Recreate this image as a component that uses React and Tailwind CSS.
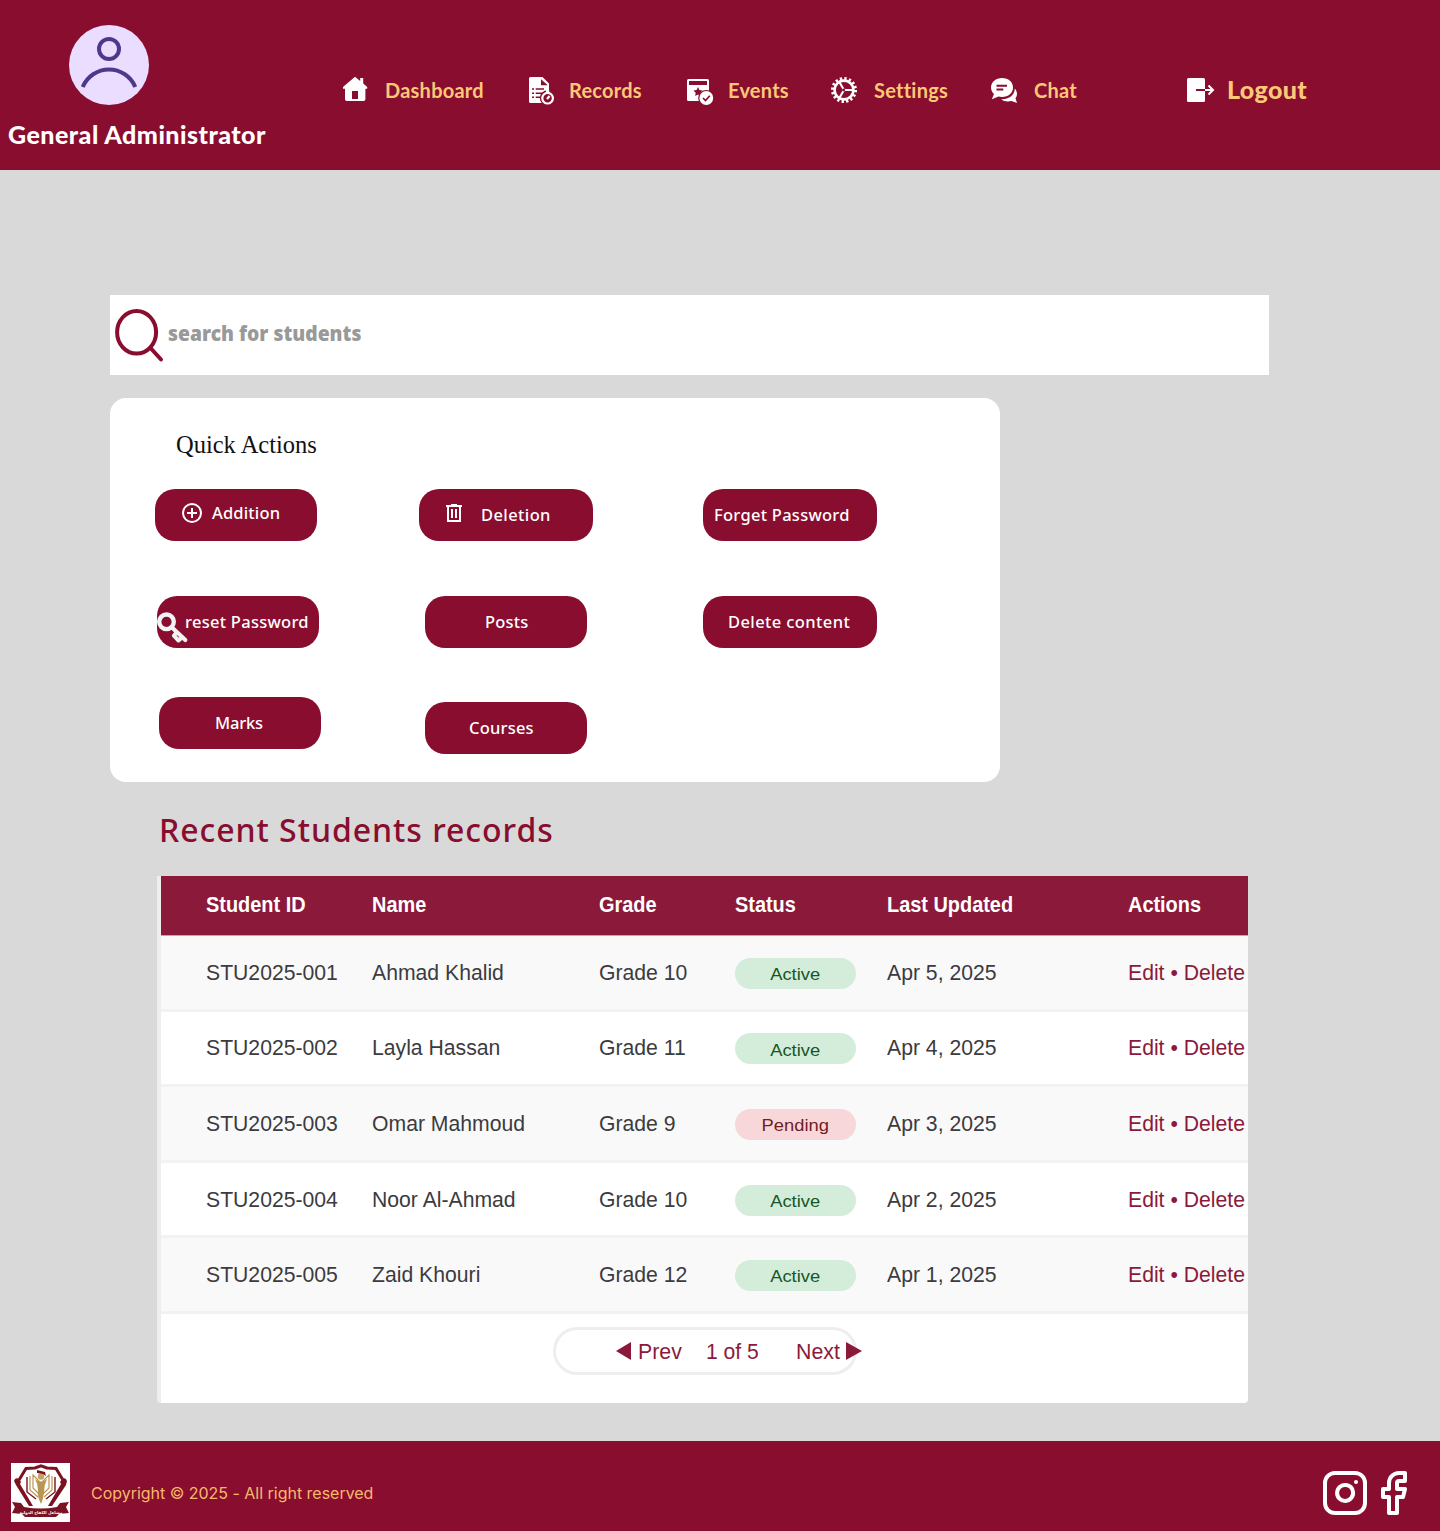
import React from "react";

const HomeIcon = () => (
  <svg width="30" height="30" viewBox="0 0 30 30" fill="white" className="shrink-0">
    <path fillRule="evenodd" d="M14 1.800 19.200 6V3h3v5.600l4 3.400v1.800h-1.800V24.300q0 1.700-1.700 1.700H5.700Q4 26 4 24.300V13.800H2V12zM11 16v8h6v-8z" />
  </svg>
);

const RecordsIcon = () => (
  <svg width="30" height="30" viewBox="0 0 30 30" className="shrink-0">
    <path d="M3.500 2H15.500L22 8.500V28H3.500Q2 28 2 26.500V3.500Q2 2 3.500 2Z" fill="white" />
    <path d="M14 4.300V10.300H20.800Z" fill="#890d2f" />
    <path d="M5 14h2M5 18.200h2M5 22.300h2M8.700 14H17M8.700 18.200H16M8.700 22.300H13" stroke="#890d2f" strokeWidth="1.500" />
    <circle cx="20.600" cy="23" r="7.800" fill="#890d2f" />
    <circle cx="20.600" cy="23.200" r="5.300" fill="none" stroke="white" strokeWidth="2.200" />
    <path d="M19 16h3.200M20 24l2.600-3" stroke="white" strokeWidth="2.200" />
  </svg>
);

const EventsIcon = () => (
  <svg width="30" height="30" viewBox="0 0 30 30" className="shrink-0">
    <rect x="1" y="4" width="22" height="22" rx="1.600" fill="white" />
    <rect x="3" y="6" width="18" height="4" fill="#890d2f" />
    <path d="m12 12 1.400 3 3.200.400-2.300 2.300.5 3.300-2.800-1.500-2.800 1.500.5-3.300L7.400 15.400l3.200-.4z" fill="#890d2f" />
    <circle cx="20.300" cy="23" r="8.100" fill="#890d2f" />
    <circle cx="20.300" cy="23" r="6.900" fill="white" />
    <path d="m17 23 2.500 2.500 4.300-4.800" fill="none" stroke="#890d2f" strokeWidth="1.700" />
  </svg>
);

const SettingsIcon = () => (
  <svg width="30" height="30" viewBox="0 0 30 30" fill="none" stroke="white" className="shrink-0">
    <circle cx="14" cy="15" r="11.500" strokeWidth="3" strokeDasharray="2.300 2.216" />
    <circle cx="14" cy="15" r="9.400" strokeWidth="2.600" />
    <path d="M15 15H23M14 15 9.500 7.200M14 15 9.500 22.800" strokeWidth="2.100" />
    <circle cx="13.600" cy="15" r="1.400" fill="#890d2f" stroke="none" />
  </svg>
);

const ChatIcon = () => (
  <svg width="30" height="30" viewBox="0 0 30 30" fill="white" className="shrink-0">
    <path d="M12 3C6 3 1 7 1 12.500c0 2.600 1.200 4.800 3 6.500L1.800 24.200 8.500 21.500c1 .3 2.300.5 3.500.5 6.500 0 11-4 11-9.500S18.500 3 12 3z" />
    <path d="M6.500 10.700H17M6.500 14.500H13.300" stroke="#890d2f" strokeWidth="1.900" />
    <path d="M24.800 13.500c3 3.500 2.600 7.300.7 9.700L27 28l-5.500-2c-4 1-8 .3-10.200-1.800C18.500 24.500 24.700 20.500 24.800 13.500z" />
  </svg>
);

const LogoutIcon = () => (
  <svg width="30" height="30" viewBox="0 0 30 30" fill="none" className="shrink-0">
    <rect x="1" y="3" width="18" height="24" rx="1.500" fill="white" />
    <path d="M10 15H19" stroke="#890d2f" strokeWidth="2" />
    <path d="M19 15H27M22.500 10.500 27 15 22.500 19.500" stroke="white" strokeWidth="2" />
  </svg>
);

const AddIcon = () => (
  <svg width="24" height="24" viewBox="0 0 24 24" fill="none" stroke="white" strokeWidth="2" className="shrink-0">
    <circle cx="12" cy="12" r="9" />
    <path d="M12 7v10M7 12h10" />
  </svg>
);

const TrashIcon = () => (
  <svg width="24" height="24" viewBox="0 0 24 24" fill="none" stroke="white" strokeWidth="2" className="shrink-0">
    <path d="M4 5h16M9 4h6M6 5v15h12V5M10 8v9M14 8v9" />
  </svg>
);

const KeyIcon = () => (
  <svg width="32" height="32" viewBox="0 0 32 32" fill="none" stroke="#f3f3f3" className="shrink-0">
    <circle cx="9.500" cy="9.800" r="7.300" strokeWidth="4.400" />
    <path d="M14.500 15 28.300 28" strokeWidth="4.200" strokeLinecap="round" />
    <path d="m19.500 20.500-2.600 3.200 4.600 4.800L25.500 25" strokeWidth="4" strokeLinejoin="round" />
  </svg>
);

const SchoolLogo = () => (
  <svg width="59" height="59" viewBox="0 0 59 59" className="shrink-0 bg-white">
    <path d="M8 17 15 5.500 24 5 30 2.800 36 5 45 5.500 52 17" fill="none" stroke="#7b1221" strokeWidth="3" />
    <path d="M3 18q1-4 5-2l2 3-1 2 13 22h-4L5 22zM56 18q-1-4-5-2l-2 3 1 2-13 22h4l14-21z" fill="#7b1221" />
    <path d="M16 14v15l9 7M44 14v15l-9 7" fill="none" stroke="#7b1221" strokeWidth="1.400" />
    <path d="M19 13v14l8 7M41 13v14l-8 7M22 12v13l6 6V18zM38 12v13l-6 6V18z" fill="none" stroke="#b99652" strokeWidth="1.200" />
    <path d="M24 16q6 5 12 0-3 6-3 13-1 8-3 12-4-8-3-14 0-6-3-11z" fill="#b99652" />
    <circle cx="30" cy="13.500" r="3.200" fill="#c3a262" />
    <path d="m26 7 8 2 1 4-3-2-6-1z" fill="#7b1221" />
    <path d="M1 39l9 1 3 4q17 3 33 0l3-4 9-1-3 5 3 6-10 1-3 3H14l-3-3-10-1 3-6z" fill="#7b1221" />
    <text x="30" y="51.300" textAnchor="middle" fill="white" fontSize="4" fontWeight="700" fontFamily="DejaVu Sans, sans-serif">مشاعل الكفاح الدولية</text>
  </svg>
);

const navText = "whitespace-nowrap font-['Lato'] text-[20px] font-bold tracking-[0.24px] text-[#fbc876]";

const navigation = [
  { label: "Dashboard", Icon: HomeIcon, box: "w-[186px] gap-[14px]" },
  { label: "Records", Icon: RecordsIcon, box: "w-[159px] gap-3" },
  { label: "Events", Icon: EventsIcon, box: "w-[144px] gap-3" },
  { label: "Settings", Icon: SettingsIcon, box: "w-[160px] gap-[14px]" },
  { label: "Chat", Icon: ChatIcon, box: "w-[196px] gap-[14px]" },
];

const Header = () => (
  <header className="flex h-[170px] bg-[#890d2f]">
    <div className="w-[341px] pt-[25px]">
      <svg width="80" height="80" viewBox="0 0 80 80" fill="none" stroke="#4f378a" strokeWidth="4" className="ml-[69px]">
        <circle cx="40" cy="40" r="40" fill="#eaddff" stroke="none" />
        <circle cx="40" cy="24" r="10" />
        <path d="M13.700 62A28.500 28.500 0 0 1 66.300 62" />
      </svg>
      <h1 className="mt-3 ml-2 whitespace-nowrap font-['Lato'] text-[25px] leading-[34px] font-black tracking-[0.48px] text-white">General Administrator</h1>
    </div>
    <nav className="mt-[75px] flex h-[30px]">
      {navigation.map(({ label, Icon, box }) => (
        <a key={label} className={`flex items-center ${box}`}>
          <Icon />
          <span className={navText}>{label}</span>
        </a>
      ))}
      <a className="flex items-center gap-[11px]">
        <LogoutIcon />
        <span className="font-['Lato'] text-[25px] font-black tracking-[0.35px] text-[#fbc876]">Logout</span>
      </a>
    </nav>
  </header>
);

const actionStyle = "flex h-[52px] items-center rounded-[20px] bg-[#890d2f] whitespace-nowrap font-['Noto_Sans'] text-[16.500px] font-medium text-white";

const QuickActions = () => (
  <section className="mt-[23px] ml-[110px] h-[384px] w-[890px] rounded-2xl bg-white pt-[31px]">
    <h2 className="ml-[66px] font-['Liberation_Serif'] text-[24.500px] leading-8 text-[#111]">Quick Actions</h2>
    <div className="mt-[28px] ml-[45px] flex gap-[102px]">
      <button className={`${actionStyle} w-[162px] gap-2 pb-1 pl-[25px] tracking-[0.15px]`}><AddIcon />Addition</button>
      <button className={`${actionStyle} w-[174px] pl-[23px] tracking-[0.4px]`}><span className="mr-[15px] mb-1"><TrashIcon /></span>Deletion</button>
      <button className={`${actionStyle} ml-2 w-[174px] pl-[11px] tracking-[0.27px]`}>Forget Password</button>
    </div>
    <div className="mt-[55px] ml-[47px] flex">
      <button className={`${actionStyle} w-[162px] tracking-[0.27px]`}><span className="mt-[11px] -mr-1"><KeyIcon /></span>reset Password</button>
      <button className={`${actionStyle} ml-[106px] w-[162px] pl-[60px] tracking-[0.2px]`}>Posts</button>
      <button className={`${actionStyle} ml-[116px] w-[174px] pl-[25px] tracking-[0.4px]`}>Delete content</button>
    </div>
    <div className="mt-[49px] ml-[49px] flex gap-[104px]">
      <button className={`${actionStyle} w-[162px] pl-14 tracking-[-0.2px]`}>Marks</button>
      <button className={`${actionStyle} mt-[5px] w-[162px] pl-11 tracking-[0.2px]`}>Courses</button>
    </div>
  </section>
);

const students = [
  ["STU2025-001", "Ahmad Khalid", "Grade 10", "Active", "Apr 5, 2025"],
  ["STU2025-002", "Layla Hassan", "Grade 11", "Active", "Apr 4, 2025"],
  ["STU2025-003", "Omar Mahmoud", "Grade 9", "Pending", "Apr 3, 2025"],
  ["STU2025-004", "Noor Al-Ahmad", "Grade 10", "Active", "Apr 2, 2025"],
  ["STU2025-005", "Zaid Khouri", "Grade 12", "Active", "Apr 1, 2025"],
];

const columns = "grid grid-cols-[166px_227px_136px_152px_241px_120px] items-center pl-[45px] whitespace-nowrap";
const cell = "origin-left scale-x-[0.963]";

const RecordsTable = () => (
  <section className="mt-[25px] ml-[157px] h-[527px] w-[1091px] overflow-hidden rounded-b border-l-4 border-[#eeeeee] bg-white font-['Liberation_Sans'] text-[22px] text-[#3b3b40]">
    <div className={`${columns} -ml-px h-[60px] border-b border-[#c9a0ac] bg-[#8b1a3a] pl-[46px] font-bold text-white`}>
      {["Student ID", "Name", "Grade", "Status", "Last Updated", "Actions"].map((title) => (
        <span key={title} className="origin-left scale-x-[0.905] pb-[3px]">{title}</span>
      ))}
    </div>
    {students.map(([id, name, grade, status, updated], index) => (
      <div key={id} className={`${columns} h-[75.600px] border-b-[3px] border-[#f2f2f2] ${index % 2 === 0 ? "bg-[#f9f9f9]" : "bg-white"}`}>
        <span className={cell}>{id}</span>
        <span className={cell}>{name}</span>
        <span className={cell}>{grade}</span>
        <span className={`mt-[2px] flex h-[31px] w-[121px] items-center justify-center rounded-full pt-[3px] text-[17px] ${status === "Active" ? "bg-[#d4edda] text-[#155724]" : "bg-[#f8d7da] text-[#721c24]"}`}>
          <span className="scale-x-[1.08]">{status}</span>
        </span>
        <span className={cell}>{updated}</span>
        <span className={`${cell} text-[#8b1a3a]`}>Edit • Delete</span>
      </div>
    ))}
    <div className="mt-[13px] ml-[392px] flex h-[48px] w-[304px] items-center rounded-full border-[3px] border-[#eeeeee] pt-px pl-[60px] whitespace-nowrap text-[#8b1a3a]">
      <svg width="15" height="18" viewBox="0 0 15 18" fill="#8b1a3a" className="shrink-0"><path d="M0 9 15 0v18z" /></svg>
      <span className="ml-[7px] w-[68px] shrink-0 origin-left scale-x-[0.97]">Prev</span>
      <span className="w-[90px] shrink-0 origin-left scale-x-[0.96]">1 of 5</span>
      <span className="w-[50px] shrink-0 origin-left scale-x-[0.97]">Next</span>
      <svg width="16" height="18" viewBox="0 0 16 18" fill="#8b1a3a" className="shrink-0"><path d="M0 0 16 9 0 18z" /></svg>
    </div>
  </section>
);

const Footer = () => (
  <footer className="mt-[38px] flex h-[90px] items-start bg-[#890d2f] pt-[22px] pl-[11px]">
    <SchoolLogo />
    <p className="mt-[18px] ml-[21px] font-['Inter'] text-[16px] leading-6 tracking-[-0.02px] text-[#f6b96b]">Copyright © 2025 - All right reserved</p>
    <div className="mt-[6px] mr-[23px] ml-auto flex">
      <svg width="48" height="48" viewBox="0 0 24 24" fill="none" stroke="white" strokeWidth="2" strokeLinecap="round" strokeLinejoin="round">
        <rect x="2" y="2" width="20" height="20" rx="5" />
        <path d="M16 11.370A4 4 0 1 1 12.630 8 4 4 0 0 1 16 11.370zM17.500 6.500h.01" />
      </svg>
      <svg width="48" height="48" viewBox="0 0 24 24" fill="none" stroke="white" strokeWidth="2" strokeLinecap="round" strokeLinejoin="round">
        <path d="M18 2h-3a5 5 0 0 0-5 5v3H7v4h3v8h4v-8h3l1-4h-4V7a1 1 0 0 1 1-1h3z" />
      </svg>
    </div>
  </footer>
);

export default function App() {
  return (
    <div className="h-[1531px] w-[1440px] overflow-hidden bg-[#d9d9d9]">
      <Header />
      <div className="mt-[125px] ml-[110px] flex h-20 w-[1159px] items-start bg-white">
        <svg width="56" height="56" viewBox="0 0 56 56" fill="none" stroke="#890d2f" strokeWidth="4" strokeLinecap="round" className="mt-3 shrink-0">
          <ellipse cx="26.600" cy="25.300" rx="19.500" ry="21.300" />
          <path d="m41 41.500 10 11" />
        </svg>
        <span className="mt-[22px] ml-[2px] origin-left scale-x-[0.92] font-['Noto_Sans'] text-[21px] leading-8 font-black text-[#999]">search for students</span>
      </div>
      <QuickActions />
      <h2 className="mt-[24px] ml-[159px] h-[45px] whitespace-nowrap font-['Noto_Sans'] text-[32px] leading-[48px] font-medium tracking-[0.97px] text-[#890d2f]">Recent Students records</h2>
      <RecordsTable />
      <Footer />
    </div>
  );
}
